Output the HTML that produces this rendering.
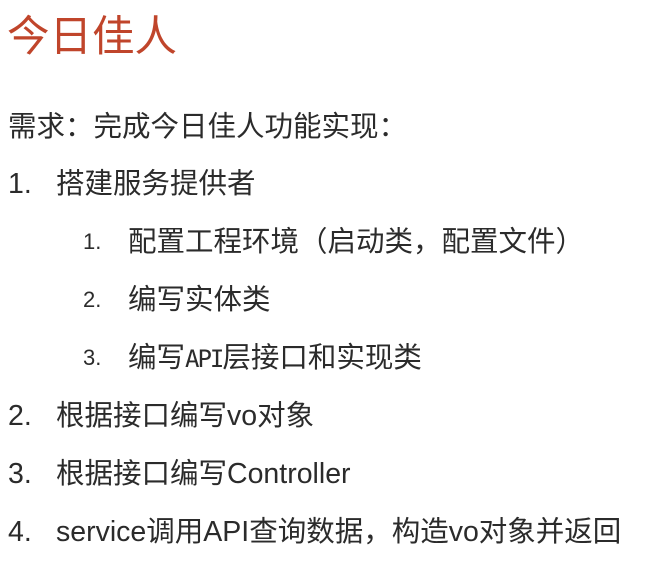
<!DOCTYPE html>
<html><head><meta charset="utf-8"><style>
body{margin:0;width:660px;height:569px;background:#fff;overflow:hidden;font-family:"Liberation Sans","Noto Sans CJK SC",sans-serif;color:#2b2b2b}
.t{position:absolute;left:7px;top:13px;font-size:42.5px;color:#c0452b;line-height:50px}
.l{position:absolute;font-size:28.5px;line-height:34px;white-space:nowrap}
.n{position:absolute}
.s{font-size:22px}
</style></head><body>
<div class="t">今日佳人</div>
<div class="l" style="left:8px;top:110px">需求：完成今日佳人功能实现：</div>
<div class="l" style="left:8px;top:167px"><span class="n" style="left:0">1.</span><span style="margin-left:48px">搭建服务提供者</span></div>
<div class="l" style="left:83px;top:225px"><span class="n s" style="left:0">1.</span><span style="margin-left:45px">配置工程环境（启动类，配置文件）</span></div>
<div class="l" style="left:83px;top:283px"><span class="n s" style="left:0">2.</span><span style="margin-left:45px">编写实体类</span></div>
<div class="l" style="left:83px;top:341px"><span class="n s" style="left:0">3.</span><span style="margin-left:45px">编写<span style="font-family:'DejaVu Sans Mono',monospace;font-size:24px;letter-spacing:-2px">API</span>层接口和实现类</span></div>
<div class="l" style="left:8px;top:399px"><span class="n" style="left:0">2.</span><span style="margin-left:48px">根据接口编写vo对象</span></div>
<div class="l" style="left:8px;top:457px"><span class="n" style="left:0">3.</span><span style="margin-left:48px">根据接口编写Controller</span></div>
<div class="l" style="left:8px;top:515px"><span class="n" style="left:0">4.</span><span style="margin-left:48px">service调用API查询数据，构造vo对象并返回</span></div>
</body></html>
